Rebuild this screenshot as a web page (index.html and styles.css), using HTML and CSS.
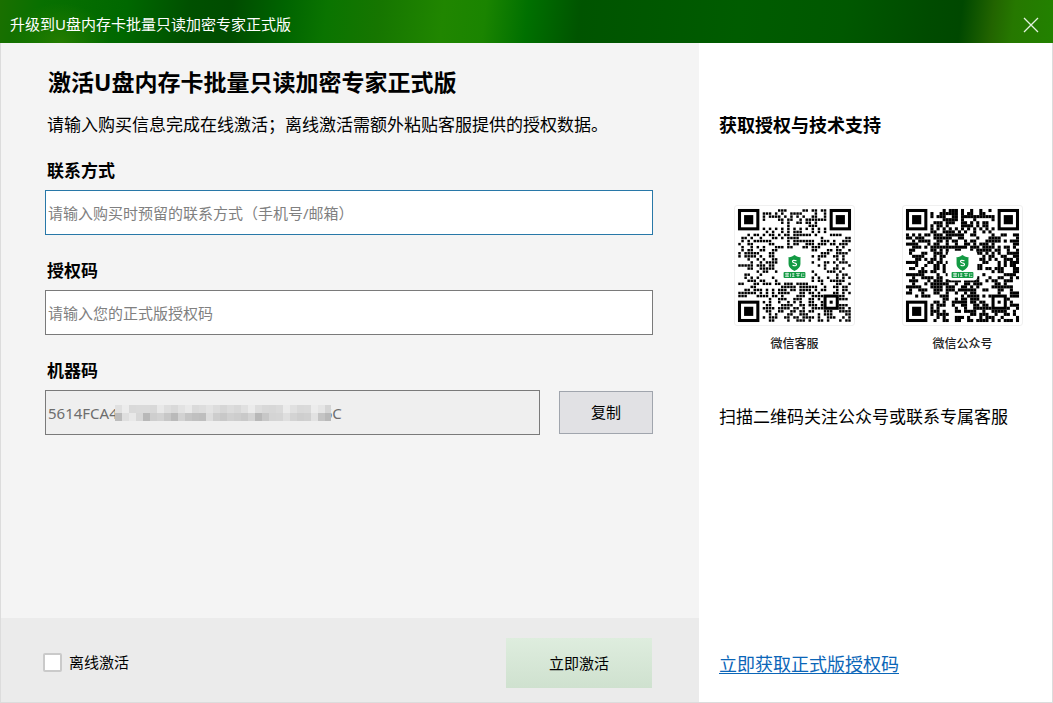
FILE: index.html
```html
<!DOCTYPE html>
<html lang="zh-CN">
<head>
  <meta charset="UTF-8">
  <meta name="viewport" content="width=device-width, initial-scale=1.0">
  <title>升级到U盘内存卡批量只读加密专家正式版</title>
  <link rel="stylesheet" href="styles.css">
</head>
<body>
  <div class="window">
    <header class="titlebar">
      <span class="title">升级到U盘内存卡批量只读加密专家正式版</span>
      <button class="close" type="button" aria-label="关闭">
        <svg width="16" height="16" viewBox="0 0 16 16"><path d="M1 1L15 15M15 1L1 15" stroke="#e4f2e0" stroke-width="1.3" fill="none"/></svg>
      </button>
    </header>

    <div class="content">
      <form class="activate" id="activate-form">
        <div class="fields">
          <h1>激活U盘内存卡批量只读加密专家正式版</h1>
          <p class="intro">请输入购买信息完成在线激活；离线激活需额外粘贴客服提供的授权数据。</p>

          <div class="field">
            <label for="contact">联系方式</label>
            <input class="active" type="text" id="contact" placeholder="请输入购买时预留的联系方式（手机号/邮箱）">
          </div>
          <div class="field">
            <label for="license">授权码</label>
            <input type="text" id="license" placeholder="请输入您的正式版授权码">
          </div>
          <div class="field">
            <label for="machine">机器码</label>
            <div class="machine-row">
              <div class="machine-box">
                <input type="text" id="machine" value="5614FCA47000000000000000000000006C" readonly>
                <svg class="mosaic" id="mosaic" width="216" height="16" viewBox="0 0 216 16" shape-rendering="crispEdges"></svg>
              </div>
              <button class="copy" type="button">复制</button>
            </div>
          </div>
        </div>

        <div class="actions">
          <label class="offline"><input type="checkbox" id="offline"><span>离线激活</span></label>
          <button class="submit" type="submit">立即激活</button>
        </div>
      </form>

      <aside class="support">
        <h2>获取授权与技术支持</h2>
        <div class="codes">
          <figure>
            <svg class="qr" id="qr-service" viewBox="0 0 120 120"></svg>
            <figcaption>微信客服</figcaption>
          </figure>
          <figure>
            <svg class="qr" id="qr-account" viewBox="0 0 120 120"></svg>
            <figcaption>微信公众号</figcaption>
          </figure>
        </div>
        <p class="scan">扫描二维码关注公众号或联系专属客服</p>
        <a class="get-code" href="#">立即获取正式版授权码</a>
      </aside>
    </div>
  </div>

  <script src="script.js"></script>
</body>
</html>
```
FILE: styles.css
```css
* {
  margin: 0;
  padding: 0;
  box-sizing: border-box;
}

body {
  font-family: "Noto Sans", "Noto Sans CJK SC", sans-serif;
  font-size: 15px;
  color: #000;
}

button,
input {
  font: inherit;
  color: inherit;
}

.window {
  display: flex;
  flex-direction: column;
  min-height: 100vh;
  background-color: #fff;
}

.titlebar {
  display: flex;
  justify-content: space-between;
  align-items: center;
  height: 43px;
  padding: 6px 14px 0 10px;
  color: #fff;
  background:
    radial-gradient(ellipse 50px 40px at 60px 43px, rgba(50, 130, 0, 0.7), rgba(40, 130, 0, 0)),
    linear-gradient(97deg, #1a7000 0%, #087000 4%, #006800 12%, #005000 18%, #004c00 22%, #006400 27%, #0a7400 31%, #167600 36%, #208600 42%, #1a8400 46%, #007000 50%, #005400 55%, #005800 63%, #005c00 70%, #005800 80%, #004b00 88%, #004800 91%, #226400 94%, #267800 96%, #228200 100%);
}

.title {
  line-height: 22px;
  padding-bottom: 2px;
}

.close {
  display: flex;
  border: none;
  background: none;
  cursor: pointer;
}

.content {
  flex: 1;
  display: grid;
  grid-template-columns: minmax(0, 1fr) 353px;
  border: 1px solid #dcdcdc;
  border-top: none;
}

.activate {
  display: flex;
  flex-direction: column;
  background-color: #f4f4f4;
}

.fields {
  flex: 1;
  padding: 23px 46px 24px 44px;
}

h1 {
  padding-left: 3px;
  font-size: 23px;
  line-height: 32px;
}

.intro {
  margin: 15px 0 22px;
  padding-left: 2px;
  font-size: 17px;
  line-height: 24px;
}

.field {
  margin-bottom: 24px;
}

.field > label {
  display: block;
  margin-bottom: 7px;
  padding-left: 2px;
  font-size: 17px;
  font-weight: bold;
  line-height: 24px;
}

.field input {
  display: block;
  width: 100%;
  height: 45px;
  padding: 0 2px;
  border: 1px solid #7a7a7a;
  background-color: #fff;
  outline: none;
}

.field input.active {
  border-color: #2878a8;
}

.field input::placeholder {
  color: #808080;
  opacity: 1;
}

.machine-row {
  display: flex;
  align-items: center;
  gap: 19px;
}

.machine-box {
  position: relative;
  flex: 1;
}

.machine-box input {
  color: #6d6d6d;
  background-color: #efefef;
}

/* hides the middle of the machine code */
.mosaic {
  position: absolute;
  left: 70px;
  top: 15px;
}

.copy {
  width: 94px;
  height: 43px;
  padding-bottom: 2px;
  border: 1px solid #a0a5ad;
  background-color: #e1e1e4;
  cursor: pointer;
}

.actions {
  display: flex;
  justify-content: space-between;
  align-items: center;
  height: 84px;
  padding: 6px 47px 0 42px;
  background-color: #ebebeb;
}

.offline {
  display: flex;
  align-items: center;
  gap: 7px;
  padding-bottom: 2px;
}

.offline span {
  padding-bottom: 2px;
}

.offline input {
  appearance: none;
  width: 19px;
  height: 19px;
  border: 2px solid #cacaca;
  border-radius: 2px;
  background-color: #fff;
}

.offline input:checked {
  background-color: #1f9a45;
}

.submit {
  width: 146px;
  height: 50px;
  padding-bottom: 2px;
  border: none;
  background: linear-gradient(#deedde, #cfe1cf);
  cursor: pointer;
}

.support {
  display: flex;
  flex-direction: column;
  align-items: flex-start;
  padding: 70px 16px 25px 20px;
}

h2 {
  font-size: 18px;
  line-height: 24px;
}

.codes {
  display: flex;
  gap: 48px;
  margin: 68px 0 51px 15px;
}

figure {
  text-align: center;
}

.qr {
  display: block;
  width: 121px;
  height: 121px;
  border: 1px solid #f0f0f0;
  border-radius: 3px;
}

.codes figure + figure {
  margin-left: -1px;
}

figcaption {
  margin-top: 8px;
  font-size: 12px;
  font-weight: 500;
  line-height: 20px;
  color: #222;
}

.scan {
  font-size: 17px;
  line-height: 24px;
}

.get-code {
  margin-top: auto;
  font-size: 18px;
  line-height: 26px;
  color: #0b66b8;
  text-underline-offset: 2px;
}
```
FILE: script.js
```javascript
const SIZE = 37;

// Returns a repeatable 0..1 generator
function makeRandom(seed) {
  return function () {
    seed = (seed * 1103515245 + 12345) % 2147483648;
    return seed / 2147483648;
  };
}

function ring(x, y, n, unit) {
  const u = unit;
  return `<rect x="${x}" y="${y}" width="${n * u}" height="${n * u}"/>` +
    `<rect x="${x + u}" y="${y + u}" width="${(n - 2) * u}" height="${(n - 2) * u}" fill="#fff"/>` +
    `<rect x="${x + 2 * u}" y="${y + 2 * u}" width="${(n - 4) * u}" height="${(n - 4) * u}"/>`;
}

function isReserved(col, row, hole) {
  const near = 8;
  const far = SIZE - 8;
  if ((col < near && row < near) || (col >= far && row < near) || (col < near && row >= far)) {
    return true;
  }
  if (Math.abs(col - 30) < 3 && Math.abs(row - 30) < 3) {
    return true;
  }
  return Math.abs(col - 18) <= hole && Math.abs(row - 18) <= hole;
}

function drawCode(id, seed, dot, hole, density) {
  const unit = 114 / SIZE;
  const start = 3;
  const end = start + (SIZE - 7) * unit;
  const random = makeRandom(seed);
  let cells = "";

  for (let row = 0; row < SIZE; row++) {
    for (let col = 0; col < SIZE; col++) {
      let dark = random() < density;
      if (row === 6) dark = col % 2 === 0;
      if (col === 6) dark = row % 2 === 0;
      if (dark && !isReserved(col, row, hole)) {
        const gap = (unit - dot) / 2;
        cells += `<rect x="${start + col * unit + gap}" y="${start + row * unit + gap}" width="${dot}" height="${dot}"/>`;
      }
    }
  }

  cells += ring(start, start, 7, unit) + ring(end, start, 7, unit) + ring(start, end, 7, unit);
  cells += ring(start + 28 * unit, start + 28 * unit, 5, unit);

  // shield logo in the middle
  cells += `
    <rect x="45" y="45" width="30" height="30" rx="4" fill="#fff"/>
    <path d="M60 49.500Q63 52 66 51.500V58.500Q66 62.500 60 65.500Q54 62.500 54 58.500V51.500Q57 52 60 49.500Z" fill="#139a43"/>
    <path d="M62 55.300Q58 54 58 56Q58 57.200 60 57.400Q62.200 57.700 62 59.200Q61.700 61 58 59.800" fill="none" stroke="#fff" stroke-width="1.1"/>
    <rect x="49" y="66.500" width="22" height="6" rx="1" fill="#139a43"/>
    <path d="M50.500 68h4M50.500 69.500h4M50.500 71h4M52.500 67.200v4.500M56 68v3.500M57.500 68.500h2.500M58.700 67.500v4M57.500 71h2.500M61.500 68h4M62 70h3M63.500 67.500v4M67 68v3.500M68 68.500h2M68 71h2" fill="none" stroke="#d6efdf" stroke-width=".8"/>`;
  document.getElementById(id).innerHTML = cells;
}

function drawMosaic() {
  const rows = [
    ["#e0e0e0", "#ececec", "#d9d9d9", "#dadada", "#dadada", "#d8d8d8", "#e8e8e8", "#dedede", "#d9d9d9", "#e2e2e2", "#e9e9e9", "#dadada", "#dddddd", "#e3e3e3", "#dcdcdc", "#d6d6d6", "#dcdcdc", "#d8d8d8", "#e0e0e0", "#ebebeb", "#dddddd", "#d8d8d8", "#d7d7d7", "#dadada", "#ebebeb", "#e0e0e0", "#d9d9d9", "#dadada", "#ececec", "#e5e5e5", "#d5d5d5"],
    ["#bcbcbc", "#dfdfdf", "#e8e8e8", "#d7d7d7", "#b8b8b8", "#cecece", "#d2d2d2", "#c7c7c7", "#bababa", "#d2d2d2", "#c5c5c5", "#c0c0c0", "#bebebe", "#dddddd", "#cdcdcd", "#c8c8c8", "#d0d0d0", "#cdcdcd", "#c9c9c9", "#d3d3d3", "#b8b8b8", "#c7c7c7", "#d4d4d4", "#d5d5d5", "#dfdfdf", "#d3d3d3", "#cecece", "#d0d0d0", "#e2e2e2", "#c4c4c4", "#b9b9b9"]
  ];
  let cells = "";
  rows.forEach((row, y) => {
    row.forEach((color, x) => {
      cells += `<rect x="${x * 7}" y="${y * 8}" width="7" height="8" fill="${color}"/>`;
    });
  });
  document.getElementById("mosaic").innerHTML = cells;
}

drawCode("qr-service", 4127, 2.5, 5, 0.5);
drawCode("qr-account", 911, 3.1, 4, 0.52);
drawMosaic();

document.getElementById("activate-form").addEventListener("submit", (e) => e.preventDefault());

document.querySelector(".copy").addEventListener("click", () => {
  document.getElementById("machine").select();
});
```
